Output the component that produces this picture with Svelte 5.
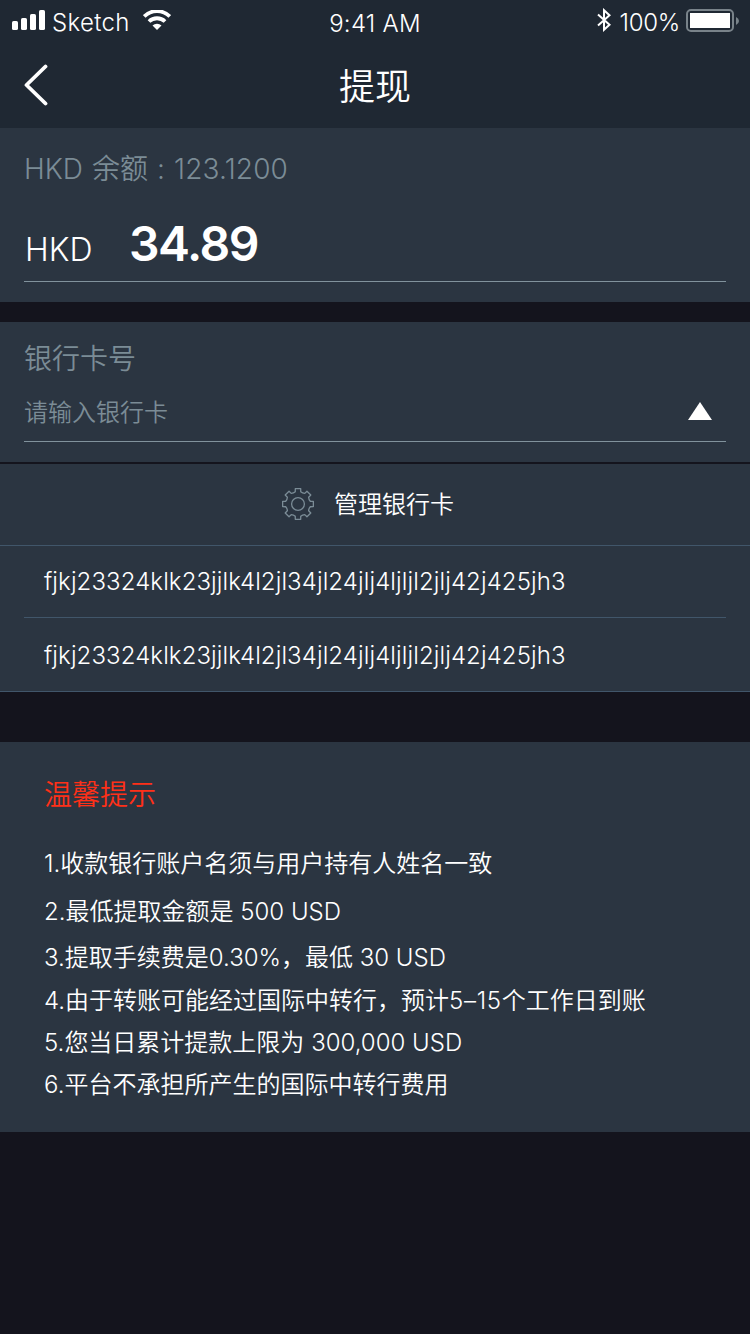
<script>
  const cards = [
    'fjkj23324klk23jjlk4l2jl34jl24jlj4ljljl2jlj42j425jh3',
    'fjkj23324klk23jjlk4l2jl34jl24jlj4ljljl2jlj42j425jh3'
  ];
  const tips = [
    { height: 48, parts: ['1.', '收款银行账户名须与用户持有人姓名一致'] },
    { height: 48, parts: ['2.', '最低提取金额是', ' 500 USD'] },
    { height: 44, parts: ['3.', '提取手续费是', '0.30%', '，最低', ' 30 USD'] },
    { height: 42, parts: ['4.', '由于转账可能经过国际中转行，预计', '5–15', '个工作日到账'] },
    { height: 42, parts: ['5.', '您当日累计提款上限为', ' 300,000 USD'] },
    { height: 42, parts: ['6.', '平台不承担所产生的国际中转行费用'] }
  ];
  const isHan = (text) => /[\u4e00-\u9fff]/.test(text);
  const gearTeeth = [0, 45, 90, 135, 180, 225, 270, 315];
  const rad = (deg) => (deg * Math.PI) / 180;
  const point = (r, deg) => `${(16 + r * Math.sin(rad(deg))).toFixed(2)} ${(16 - r * Math.cos(rad(deg))).toFixed(2)}`;
  const gear =
    'M' +
    gearTeeth
      .map((a) => `${point(12.6, a - 12.5)}L${point(15.6, a - 10)}L${point(15.6, a + 10)}L${point(12.6, a + 12.5)}Q${point(11.6, a + 22.5)} ${point(12.6, a + 32.5)}`)
      .join('L') +
    'Z';
</script>

<main>
  <header>
    <div class="status">
      <div class="left">
        <svg class="signal" width="33" height="20" viewBox="0 0 33 20" fill="#fff">
          <rect y="11" width="6" height="9" rx="1.6" />
          <rect x="9" y="8" width="6" height="12" rx="1.6" />
          <rect x="18" y="4" width="6" height="16" rx="1.6" />
          <rect x="27" width="6" height="20" rx="1.6" />
        </svg>
        <span class="carrier">Sketch</span>
        <svg class="wifi" width="28" height="20" viewBox="0 0 28 20">
          <path d="M1.2 6.4a18.2 18.2 0 0 1 25.6 0M6 11.5a11.5 11.5 0 0 1 16 0" fill="none" stroke="#fff" stroke-width="3.8" />
          <path d="M14 20l-4.5-4.4a6.6 6.6 0 0 1 9 0z" fill="#fff" />
        </svg>
      </div>
      <span class="time">9:41 AM</span>
      <div class="right">
        <svg class="bt" width="14" height="24" viewBox="0 0 14 24" fill="none" stroke="#fff" stroke-width="2">
          <path d="M1 6.5l11.5 10.3L7 21.8V2.2l5.500 5L1 17.500" />
        </svg>
        <span class="percent">100%</span>
        <svg class="battery" width="53" height="23" viewBox="0 0 53 23">
          <rect x="1" y="1" width="46" height="21" rx="4" fill="none" stroke="#79838a" stroke-width="2" />
          <rect x="4" y="4" width="40" height="15" fill="#fff" />
          <path d="M50 8q3 1.5 3 4t-3 4z" fill="#79838a" />
        </svg>
      </div>
    </div>
    <div class="nav">
      <svg class="back" width="24" height="42" viewBox="0 0 24 42">
        <path d="M21.5 2.5L2.5 21l19 18.5" fill="none" stroke="#fff" stroke-width="3.8" stroke-linecap="round" stroke-linejoin="round" />
      </svg>
      <h1>提现</h1>
      <span></span>
    </div>
  </header>

  <section class="balance">
    <p class="muted"><span class="bal-cur">HKD</span><span class="bal-name">余额</span><span class="bal-colon">:</span><span class="bal-value">123.1200</span></p>
    <div class="amount"><span class="currency">HKD</span><strong>34.89</strong></div>
  </section>

  <section class="bank">
    <p class="label">银行卡号</p>
    <div class="select">
      <span>请输入银行卡</span>
      <svg width="24" height="18" viewBox="0 0 24 18"><path d="M12 0l12 18H0z" fill="#fff" /></svg>
    </div>
  </section>

  <section class="options">
    <div class="manage">
      <svg width="32" height="32" viewBox="0 0 32 32" fill="none" stroke="#7b8c96" stroke-width="1.3" stroke-linejoin="round">
        <path d={gear} />
        <circle cx="16" cy="16" r="6.4" />
      </svg>
      <span class="han">管理银行卡</span>
    </div>
    <ul>
      {#each cards as card}
        <li><span>{card}</span></li>
      {/each}
    </ul>
  </section>

  <section class="tips">
    <h2>温馨提示</h2>
    {#each tips as tip}
      <p style="height: {tip.height}px">
        {#each tip.parts as part}<span class:han={isHan(part)} class:range={part.includes('–')}>{part}</span>{/each}
      </p>
    {/each}
  </section>
</main>

<style>
  :global(body) {
    background: #14141d;
  }
  main {
    width: 750px;
    height: 1334px;
    overflow: hidden;
    box-sizing: border-box;
    background: #14141d;
    color: #fff;
    font-family: Inter, 'Noto Sans CJK SC', sans-serif;
    font-weight: 350;
  }
  h1, h2, p, ul {
    margin: 0;
    padding: 0;
    font-weight: inherit;
  }
  span {
    white-space: pre;
  }
  svg {
    display: block;
    flex: none;
  }
  .han {
    padding-bottom: 4px;
  }
  header {
    height: 128px;
    background: #1f2833;
  }
  .status {
    height: 42px;
    display: grid;
    grid-template-columns: 1fr auto 1fr;
    font-size: 24px;
    line-height: 45px;
  }
  .left, .right {
    display: flex;
    align-items: flex-start;
  }
  .signal {
    margin: 10px 7px 0 12px;
  }
  .carrier {
    width: 91px;
    letter-spacing: 0.35px;
  }
  .time {
    line-height: 47px;
    letter-spacing: 0.25px;
  }
  .wifi {
    margin-top: 10px;
  }
  .right {
    justify-content: flex-end;
    padding-right: 11px;
  }
  .bt {
    margin: 8px 9px 0 0;
  }
  .percent {
    margin-right: 6px;
    letter-spacing: -0.3px;
  }
  .battery {
    margin-top: 9px;
  }
  .nav {
    height: 86px;
    display: grid;
    grid-template-columns: 1fr auto 1fr;
    align-items: center;
  }
  .back {
    margin-left: 24px;
  }
  h1 {
    font-size: 36px;
    line-height: 90px;
    height: 86px;
  }
  .balance {
    height: 174px;
    box-sizing: border-box;
    padding: 20px 24px;
    background: #2b3541;
    margin-bottom: 20px;
  }
  .muted, .label, .select {
    color: #7b8c96;
  }
  .muted {
    height: 40px;
    display: flex;
    font-size: 28px;
    line-height: 42px;
  }
  .bal-cur {
    width: 68px;
  }
  .bal-name {
    width: 65px;
  }
  .bal-colon {
    width: 17px;
  }
  .bal-value {
    letter-spacing: 0.15px;
  }
  .amount {
    height: 93px;
    display: flex;
    align-items: baseline;
    line-height: 111px;
    border-bottom: 1px solid #81929c;
  }
  .currency {
    width: 104px;
    padding-left: 1px;
    font-size: 32px;
  }
  strong {
    font-size: 48px;
    font-weight: 580;
    letter-spacing: -1.5px;
  }
  .bank {
    height: 140px;
    box-sizing: border-box;
    padding: 16px 24px 20px;
    background: #2b3541;
    margin-bottom: 2px;
  }
  .label {
    height: 40px;
    font-size: 28px;
    line-height: 42px;
  }
  .select {
    height: 63px;
    display: flex;
    justify-content: space-between;
    padding-right: 14px;
    border-bottom: 1px solid #81929c;
    font-size: 24px;
    line-height: 69px;
  }
  .select svg {
    margin-top: 24px;
  }
  .options {
    background: #2b3541;
    border-bottom: 1px solid #41566a;
    margin-bottom: 50px;
  }
  .manage {
    height: 80px;
    padding-bottom: 1px;
    display: flex;
    align-items: center;
    gap: 20px;
    padding-left: 282px;
    border-bottom: 1px solid #41566a;
    font-size: 24px;
  }
  ul {
    list-style: none;
    padding: 0 24px;
  }
  li {
    height: 71px;
    padding-left: 20px;
    font-size: 24px;
    line-height: 71px;
    letter-spacing: 0.1px;
  }
  li + li {
    height: 73px;
    line-height: 75px;
    border-top: 1px solid #41566a;
  }
  .tips {
    height: 390px;
    box-sizing: border-box;
    padding: 32px 44px 0;
    background: #2b3541;
  }
  h2 {
    height: 65px;
    color: #ff3018;
    font-size: 28px;
    line-height: 42px;
  }
  .tips p {
    display: flex;
    align-items: center;
    font-size: 24px;
  }
  .range {
    letter-spacing: 0.7px;
  }
</style>
